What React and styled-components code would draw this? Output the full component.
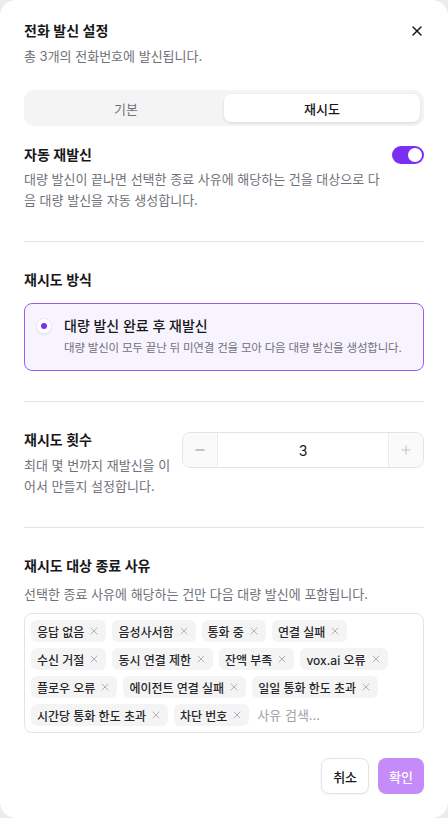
import { useState } from 'react'
import styled, { createGlobalStyle } from 'styled-components'
import { X, Minus, Plus } from 'lucide-react'

const GlobalStyle = createGlobalStyle`
  html, body {
    margin: 0;
    padding: 0;
    background: #ececec;
  }
  body {
    font-family: Inter, "Noto Sans CJK KR", "Noto Sans", sans-serif;
    color: #18181b;
    -webkit-font-smoothing: antialiased;
  }
  * { box-sizing: border-box; }
`

const Dialog = styled.div`
  width: 448px;
  min-height: 818px;
  background: #fff;
  border-radius: 16px;
  padding: 21px 24px 24px;
  display: flex;
  flex-direction: column;
`

const HeaderRow = styled.div`
  display: flex;
  align-items: flex-start;
  justify-content: space-between;
`

const Title = styled.h2`
  margin: 0;
  font-size: 14px;
  line-height: 20px;
  font-weight: 600;
`

const Subtitle = styled.p`
  margin: 5px 0 0;
  font-size: 13px;
  line-height: 20px;
  color: #71717a;
`

const CloseButton = styled.button`
  border: 0;
  background: none;
  padding: 0;
  margin: 2px -1px 0 0;
  display: flex;
  color: #18181b;
  cursor: pointer;
`

const Tabs = styled.div`
  margin-top: 24px;
  height: 36px;
  padding: 4px;
  border-radius: 10px;
  background: #f4f4f5;
  display: grid;
  grid-template-columns: 1fr 1fr;
`

const Tab = styled.button`
  border: 0;
  border-radius: 7px;
  font-family: inherit;
  font-size: 13px;
  font-weight: ${p => (p.$active ? 500 : 400)};
  color: ${p => (p.$active ? '#18181b' : '#71717a')};
  background: ${p => (p.$active ? '#fff' : 'transparent')};
  box-shadow: ${p => (p.$active ? '0 1px 3px rgba(0,0,0,0.12)' : 'none')};
  cursor: pointer;
`

const Section = styled.section`
  padding-top: ${p => p.$top || 28}px;
  padding-bottom: ${p => p.$bottom ?? 30}px;
  border-bottom: ${p => (p.$last ? 0 : '1px solid #e4e4e7')};
`

const Row = styled.div`
  display: flex;
  align-items: flex-start;
  gap: ${p => p.$gap || 8}px;
`

const Grow = styled.div`
  flex: 1;
  min-width: 0;
`

const Label = styled.h3`
  margin: 0;
  font-size: 14px;
  line-height: 20px;
  font-weight: 600;
`

const Desc = styled.p`
  margin: ${p => p.$mt ?? 4}px 0 0;
  font-size: 13px;
  line-height: ${p => p.$lh || 21}px;
  color: #71717a;
`

const Switch = styled.button`
  width: 32px;
  height: 18px;
  border: 0;
  border-radius: 9px;
  padding: 2px;
  margin-top: 1px;
  background: ${p => (p.$on ? '#7a2ff2' : '#d4d4d8')};
  display: flex;
  justify-content: ${p => (p.$on ? 'flex-end' : 'flex-start')};
  cursor: pointer;
  &::after {
    content: '';
    width: 14px;
    height: 14px;
    border-radius: 50%;
    background: #fff;
  }
`

const OptionCard = styled.div`
  margin-top: 13px;
  border: 1px solid #9d5cf0;
  background: #f8f4ff;
  border-radius: 8px;
  padding: 12px 8px 13px 11px;
  display: flex;
  gap: 12px;
`

const Radio = styled.span`
  flex: none;
  width: 16px;
  height: 16px;
  margin-top: 2px;
  border-radius: 50%;
  background: #fff;
  border: 1px solid #ece6f7;
  box-shadow: 0 1px 2px rgba(0,0,0,0.06);
  display: flex;
  align-items: center;
  justify-content: center;
  &::after {
    content: '';
    width: 6px;
    height: 6px;
    border-radius: 50%;
    background: #7a2ff2;
  }
`

const OptionTitle = styled.div`
  font-size: 14px;
  line-height: 20px;
  font-weight: 500;
`

const OptionDesc = styled.div`
  margin-top: 3px;
  font-size: 11.5px;
  line-height: 18px;
  letter-spacing: -0.2px;
  white-space: nowrap;
  color: #71717a;
`

const CountText = styled.div`
  width: 150px;
  flex: none;
`

const Stepper = styled.div`
  flex: 1;
  height: 36px;
  margin-top: 2px;
  border: 1px solid #e4e4e7;
  border-radius: 8px;
  display: flex;
  overflow: hidden;
`

const StepButton = styled.button`
  width: 35px;
  flex: none;
  border: 0;
  background: #fafafa;
  color: ${p => (p.$dim ? '#c4c4c8' : '#8a8a92')};
  display: flex;
  align-items: center;
  justify-content: center;
  border-${p => p.$side}: 1px solid #ececef;
  padding: 0;
`

const StepValue = styled.div`
  flex: 1;
  display: flex;
  align-items: center;
  justify-content: center;
  font-size: 14px;
  background: #fff;
`

const TagBox = styled.div`
  margin-top: 9px;
  border: 1px solid #e4e4e7;
  border-radius: 8px;
  padding: 6px;
  display: flex;
  flex-wrap: wrap;
  gap: 6px;
`

const Tag = styled.span`
  height: 22px;
  padding: 0 6px;
  border-radius: 6px;
  background: #f4f4f5;
  display: inline-flex;
  align-items: center;
  gap: 4px;
  font-size: 12px;
  font-weight: 500;
  color: #27272a;
  svg { color: #9f9fa8; }
`

const SearchInput = styled.input`
  flex: 1;
  min-width: 80px;
  height: 22px;
  border: 0;
  outline: none;
  padding: 0 2px;
  font-family: inherit;
  font-size: 13px;
  background: transparent;
  &::placeholder { color: #a1a1aa; }
`

const Footer = styled.div`
  margin-top: 25px;
  display: flex;
  justify-content: flex-end;
  gap: 9px;
`

const Button = styled.button`
  height: 36px;
  padding: 0 11px;
  border-radius: 8px;
  font-family: inherit;
  font-size: 13px;
  font-weight: 500;
  border: ${p => (p.$primary ? 0 : '1px solid #e4e4e7')};
  background: ${p => (p.$primary ? '#c48bf9' : '#fff')};
  color: ${p => (p.$primary ? '#fff' : '#18181b')};
  box-shadow: ${p => (p.$primary ? 'none' : '0 1px 2px rgba(0,0,0,0.05)')};
`

const reasons = [
  '응답 없음', '음성사서함', '통화 중', '연결 실패', '수신 거절', '동시 연결 제한',
  '잔액 부족', 'vox.ai 오류', '플로우 오류', '에이전트 연결 실패', '일일 통화 한도 초과',
  '시간당 통화 한도 초과', '차단 번호',
]

function App() {
  const [tab, setTab] = useState('retry')
  const [auto, setAuto] = useState(true)
  const [count, setCount] = useState(3)
  const [tags, setTags] = useState(reasons)

  return (
    <>
      <GlobalStyle />
      <Dialog>
        <HeaderRow>
          <div>
            <Title>전화 발신 설정</Title>
            <Subtitle>총 3개의 전화번호에 발신됩니다.</Subtitle>
          </div>
          <CloseButton><X size={16} strokeWidth={2.2} /></CloseButton>
        </HeaderRow>

        <Tabs>
          <Tab $active={tab === 'basic'} onClick={() => setTab('basic')}>기본</Tab>
          <Tab $active={tab === 'retry'} onClick={() => setTab('retry')}>재시도</Tab>
        </Tabs>

        <Section $top={19}>
          <Row>
            <Grow>
              <Label>자동 재발신</Label>
              <Desc>대량 발신이 끝나면 선택한 종료 사유에 해당하는 건을 대상으로 다음 대량 발신을 자동 생성합니다.</Desc>
            </Grow>
            <Switch $on={auto} onClick={() => setAuto(!auto)} />
          </Row>
        </Section>

        <Section>
          <Label>재시도 방식</Label>
          <OptionCard>
            <Radio />
            <div>
              <OptionTitle>대량 발신 완료 후 재발신</OptionTitle>
              <OptionDesc>대량 발신이 모두 끝난 뒤 미연결 건을 모아 다음 대량 발신을 생성합니다.</OptionDesc>
            </div>
          </OptionCard>
        </Section>

        <Section>
          <Row $gap={8}>
            <CountText>
              <Label>재시도 횟수</Label>
              <Desc $mt={5}>최대 몇 번까지 재발신을 이어서 만들지 설정합니다.</Desc>
            </CountText>
            <Stepper>
              <StepButton $side="right" onClick={() => setCount(Math.max(1, count - 1))}>
                <Minus size={14} />
              </StepButton>
              <StepValue>{count}</StepValue>
              <StepButton $side="left" $dim onClick={() => setCount(count + 1)}>
                <Plus size={14} />
              </StepButton>
            </Stepper>
          </Row>
        </Section>

        <Section $last $bottom={0}>
          <Label>재시도 대상 종료 사유</Label>
          <Desc $mt={8} $lh={20}>선택한 종료 사유에 해당하는 건만 다음 대량 발신에 포함됩니다.</Desc>
          <TagBox>
            {tags.map(t => (
              <Tag key={t}>
                {t}
                <X size={12} strokeWidth={1.6} onClick={() => setTags(tags.filter(x => x !== t))} />
              </Tag>
            ))}
            <SearchInput placeholder="사유 검색..." />
          </TagBox>
        </Section>

        <Footer>
          <Button>취소</Button>
          <Button $primary>확인</Button>
        </Footer>
      </Dialog>
    </>
  )
}

export default App
